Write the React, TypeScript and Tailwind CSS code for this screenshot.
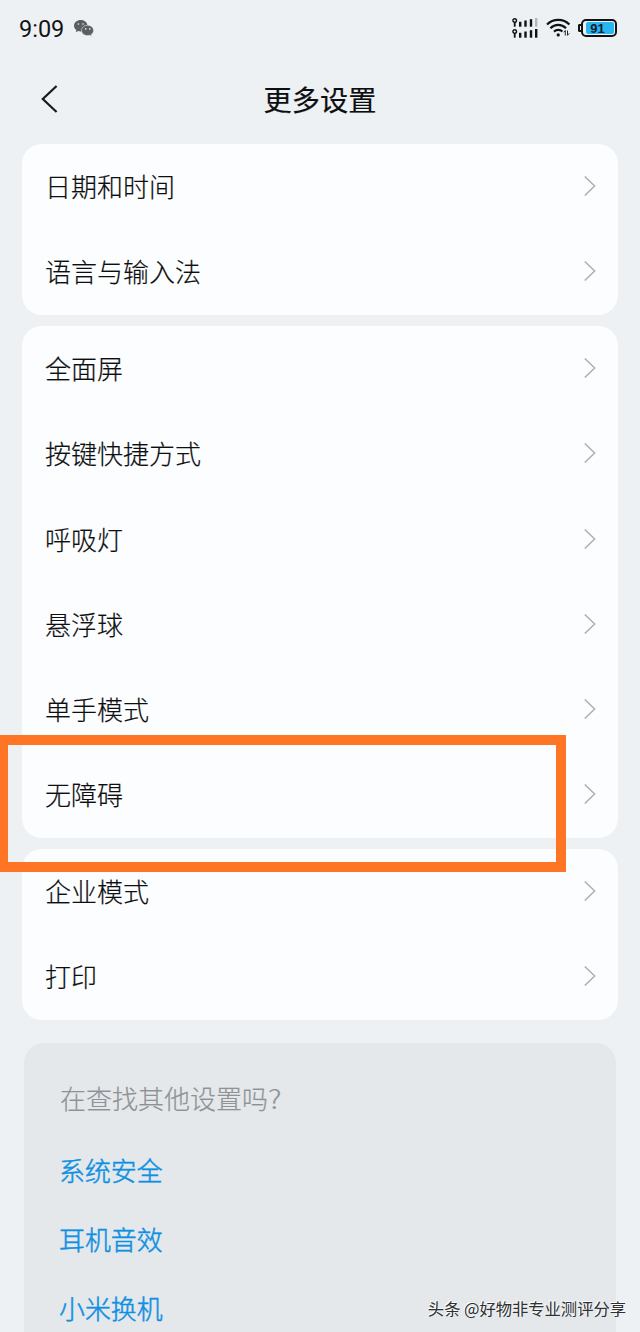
const ROW_GROUPS: string[][] = [
  ["日期和时间", "语言与输入法"],
  ["全面屏", "按键快捷方式", "呼吸灯", "悬浮球", "单手模式", "无障碍"],
  ["企业模式", "打印"],
];

const SUGGESTIONS = ["系统安全", "耳机音效", "小米换机"];

function WeChatIcon() {
  return (
    <svg width="22" height="20" viewBox="0 0 22 20" fill="#5c5e60">
      <path d="M7.8 1C3.900 1 1 3.500 1 6.700c0 1.800.9 3.300 2.400 4.400l-.6 2.100 2.400-1.200c.8.2 1.600.4 2.600.4 3.800 0 6.700-2.500 6.700-5.700S11.600 1 7.800 1z" />
      <path
        d="M14.700 6.200c-3.500 0-6.200 2.300-6.200 5.200s2.700 5.200 6.200 5.200c.7 0 1.400-.1 2-.3l2 1.100-.5-1.900c1.500-1 2.400-2.400 2.400-4.100 0-2.900-2.600-5.200-5.900-5.200z"
        stroke="#eef1f4"
        strokeWidth="0.600"
      />
      <g fill="#eef1f4">
        <circle cx="5.400" cy="5" r="0.800" />
        <circle cx="10" cy="5" r="0.800" />
        <circle cx="12.700" cy="9.900" r="0.800" />
        <circle cx="16.800" cy="9.900" r="0.800" />
      </g>
    </svg>
  );
}

function SignalRow({ weak }: { weak?: boolean }) {
  return (
    <svg width="26" height="9" viewBox="0 0 26 9" fill="#101213">
      <circle cx="2.700" cy="2.500" r="1.800" fill="none" stroke="#101213" strokeWidth="1.400" />
      <rect x="1.800" y="4" width="1.800" height="4.700" />
      <rect x="7" y="3.800" width="2.400" height="4.900" />
      <rect x="12.300" y="2.500" width="2.400" height="6.200" />
      <rect x="17.800" y="1.200" width="2.400" height="7.500" />
      <rect x="23" y="0" width="2.400" height="8.700" fill={weak ? "#b3b6b9" : "#101213"} />
    </svg>
  );
}

function WifiIcon() {
  return (
    <svg width="25" height="20" viewBox="0 0 25 20" fill="none" stroke="#101213" strokeWidth="2.200">
      <path d="M1 6.500C7.200 0.200 17.400 0.200 23.400 6.500" />
      <path d="M4.400 10.200C8.900 5.700 15.500 5.700 20 10.200" />
      <path d="M8 13.600C10.400 11.200 14.200 11.200 16.400 13.600" />
      <circle cx="12.200" cy="16.900" r="1.600" fill="#101213" stroke="none" />
      <path d="M19.300 17.500V12.500L17.700 14.300M21.500 12.500V17.300L23.200 15.400" strokeWidth="0.900" />
    </svg>
  );
}

function Battery() {
  return (
    <div className="flex h-[18px] w-[39px] items-center">
      <div className="h-2 w-[3px] rounded-l-[2px] border-2 border-r-0 border-[#101213]" />
      <div className="h-[18px] w-9 rounded-[5px] border-2 border-[#101213] p-[1px]">
        <div className="ml-[2px] flex h-3 items-center justify-center rounded-[2px] bg-[#29b5f1] pr-[5px] font-['Liberation_Sans','Noto_Sans_CJK_SC',sans-serif] text-[13px] leading-none font-bold text-[#10212b]">
          91
        </div>
      </div>
    </div>
  );
}

function StatusBar() {
  return (
    <div className="flex h-[56px] items-center pr-[23px] pl-[19px]">
      <span className="mt-1 w-[46px] font-['Roboto','Noto_Sans_CJK_SC',sans-serif] text-[23.500px] leading-none font-normal text-[#121416]">
        9:09
      </span>
      <div className="ml-2 pt-[1px]">
        <WeChatIcon />
      </div>
      <div className="ml-auto flex items-center">
        <div className="flex flex-col gap-[2px]">
          <SignalRow weak />
          <SignalRow />
        </div>
        <div className="ml-2">
          <WifiIcon />
        </div>
        <div className="ml-[7px]">
          <Battery />
        </div>
      </div>
    </div>
  );
}

function SettingRow({ label }: { label: string }) {
  return (
    <li className="flex h-[85.250px] items-center justify-between pr-[22px] pl-[23px]">
      <span className="pb-[1px] text-[26px] leading-none [-webkit-text-stroke:0.200px]">{label}</span>
      <svg className="-mt-px" width="12" height="20" viewBox="0 0 12 20" fill="none" stroke="#b0b2b5" strokeWidth="1.600">
        <path d="M0.800 0.500L10.600 10L0.800 19.500" />
      </svg>
    </li>
  );
}

export default function App() {
  return (
    <div className="relative h-[1332px] w-[640px] overflow-hidden bg-[#eef1f4] font-['Noto_Sans_CJK_SC',sans-serif] font-light text-[#0d0e10]">
      <StatusBar />
      <header className="grid h-[88px] grid-cols-3 items-center pb-[3px]">
        <svg className="ml-[41px]" width="18" height="28" viewBox="0 0 18 28" fill="none" stroke="#17191b" strokeWidth="2.200">
          <path d="M15.600 1L1.800 14L15.600 27" />
        </svg>
        <h1 className="pt-[2px] text-center text-[28.200px] leading-none font-normal [-webkit-text-stroke:0.200px]">更多设置</h1>
      </header>
      <main className="flex flex-col gap-[11.500px] px-[22px]">
        {ROW_GROUPS.map((rows) => (
          <ul key={rows[0]} className="rounded-[20px] bg-[#fcfdfe]">
            {rows.map((label) => (
              <SettingRow key={label} label={label} />
            ))}
          </ul>
        ))}
      </main>
      <section className="mx-6 mt-[23.500px] h-[320px] rounded-[20px] bg-[#e4e8eb] px-9 pt-[42px]">
        <h2 className="text-[26px] leading-[26px] text-[#8f9295] [-webkit-text-stroke:0.200px]">
          在查找其他设置吗<span className="inline-block origin-left scale-x-115">?</span>
        </h2>
        <ul className="-ml-px mt-[46px] flex flex-col gap-[43px] text-[#0f90e2] [-webkit-text-stroke:0.500px]">
          {SUGGESTIONS.map((label) => (
            <li key={label} className="text-[25.900px] leading-[26px]">
              {label}
            </li>
          ))}
        </ul>
      </section>
      <div className="absolute top-[735px] left-[-2px] h-[137px] w-[568px] border-10 border-[#ff7526]" />
      <div className="absolute right-[14px] bottom-[15px] text-[16.300px] leading-[18px] font-normal whitespace-nowrap text-[#2e3032] [text-shadow:-1px_-1px_0_#fff]">
        头条 @好物非专业测评分享
      </div>
    </div>
  );
}
